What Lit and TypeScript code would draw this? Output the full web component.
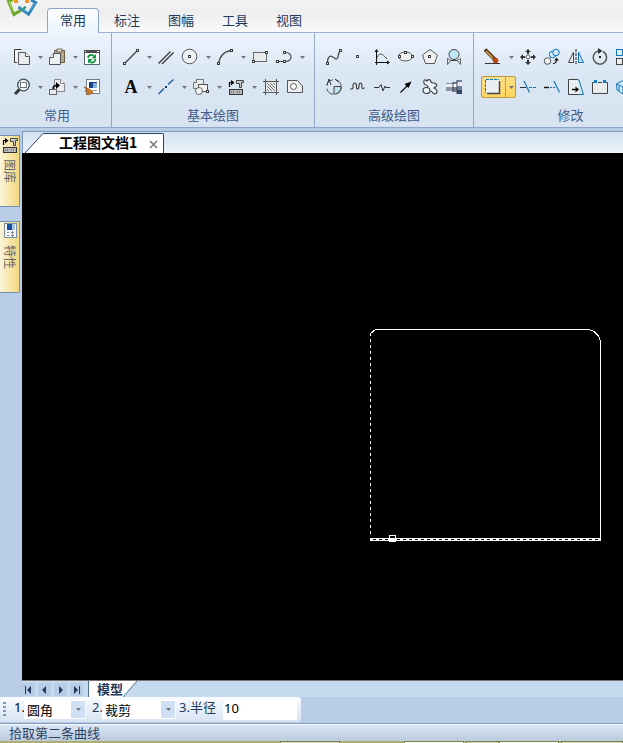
import { LitElement, html, svg, css, nothing } from "lit";
import { customElement, property, state } from "lit/decorators.js";
import { classMap } from "lit/directives/class-map.js";

const K = "#3c3c3c";
const BL = "#1373b5";

const dot = (x: number, y: number) =>
  svg`<rect x=${x - 1} y=${y - 1} width="3" height="3" fill="#3c3c3c" /><rect x=${x} y=${y} width="1" height="1" fill="#fff" />`;

const ICONS: Record<string, unknown> = {
  copy: svg`<path d="M8.500 1.500H1.500V14.500H4" fill="#f2f4f6" stroke=${K}/><path d="M5.500 4.500H12.500L16.500 8.500V16.500H5.500Z" fill="#e9ecee" stroke="#555"/><path d="M12.500 4.500V8.500H16.500" fill="#fff" stroke="#555"/>`,
  paste: svg`<path d="M6.500 2.500H16.500V14.500H6.500Z" fill="#b5a58d" stroke="#6b5d4a"/><rect x="9" y="1" width="5" height="3" fill="#e8dfc9" stroke="#5f5646" stroke-width=".8"/><path d="M5.500 5.500H12.500V16.500H1.500V9.500Z" fill="#edf1f3" stroke="#555"/><path d="M5.500 5.500V9.500H1.500" fill="#fff" stroke="#555"/>`,
  refresh: svg`<rect x="1.500" y="2.500" width="15" height="14" fill="#fff" stroke="#5d666b"/><rect x="1" y="2" width="16" height="3" fill="#4a4a4a"/><path d="M2 3.500H3M14 3.500H16" stroke="#fff"/><path d="M5 10C5.500 6.500 9.500 6 11 8.500" fill="none" stroke="#129a42" stroke-width="1.800"/><path d="M13 6V10.500H8.500Z" fill="#129a42"/><path d="M12.500 11C12 15 8 15.500 6.500 13" fill="none" stroke="#129a42" stroke-width="1.800"/><path d="M5 15.500V11H9.500Z" fill="#129a42"/>`,
  zoom: svg`<path d="M6.500 11.500L2 16" stroke="#333" stroke-width="3"/><circle cx="10.500" cy="7" r="5.800" fill="#eef6fb" stroke="#454b4f" stroke-width="1.300"/><rect x="7.500" y="4.500" width="6" height="5" fill="#fff" stroke="#6c757b"/>`,
  insert: svg`<path d="M6.500 1.500H12.500L16.500 5.500V13.500H6.500Z" fill="#eceff1" stroke="#888"/><path d="M12.500 1.500V5.500H16.500" fill="#fff" stroke="#888"/><rect x="1.500" y="11.500" width="7" height="5" fill="#e8ebee" stroke="#666"/><path d="M5 11C5 8 6 7.500 8.500 7.500" fill="none" stroke="#000" stroke-width="1.500"/><path d="M8 4L12 7.500L8 11Z" fill="#000"/>`,
  format: svg`<rect x="3.500" y="1.500" width="13" height="14" fill="#fff" stroke="#6f7b83"/><rect x="6" y="4" width="8" height="6" fill="#173f85"/><rect x="10" y="5" width="4" height="5" fill="#7fb2dc"/><path d="M9.500 12.500H14" stroke="#999"/><path d="M1 9L7 11.500L10 14C8 17 5 17 3 16L6 14.500L2 13L4 12Z" fill="#d97b21" stroke="#8d4d13" stroke-width=".8"/>`,
  line: svg`<path d="M2.500 15.500L15.500 2.500" stroke=${K} stroke-width="1.200"/>${dot(2, 15)}${dot(15, 2)}`,
  parallel: svg`<path d="M1.500 15.500L13.500 3.500M5 16L16.500 4.500" stroke=${K} stroke-width="1.400"/>`,
  circle: svg`<circle cx="8.500" cy="8.500" r="7.300" fill="#eef1f3" stroke="#555"/>${dot(8, 8)}`,
  arc: svg`<path d="M2.500 16C3.500 8 8 3.500 15.500 2.500" fill="none" stroke="#555" stroke-width="1.300"/>${dot(2, 15)}${dot(15, 2)}`,
  rect: svg`<rect x="2.500" y="4.500" width="13" height="9" fill="#e9ecee" stroke="#666"/>${dot(2, 13)}${dot(15, 4)}`,
  poly: svg`<path d="M2.500 13.500H10.500C18 13.500 18 4 10 4.500H9" fill="none" stroke="#555" stroke-width="1.200"/>${dot(2, 13)}${dot(9, 13)}${dot(9, 4)}`,
  text: svg`<text x="9" y="15" text-anchor="middle" font-family="Liberation Serif, serif" font-weight="700" font-size="18" fill="#0b0b0b">A</text>`,
  center: svg`<path d="M1.500 16L7 10.500M11 6.500L16.500 1.500" stroke="#1a5a9c" stroke-width="1.400"/><rect x="8" y="8" width="2" height="2" fill="#0e3b70"/>`,
  block: svg`<path d="M4.500 1.500H11.500V10.500H1.500V4.500Z" fill="#e8ebed" stroke="#777"/><path d="M4.500 1.500V4.500H1.500" fill="#fff" stroke="#777"/><rect x="6.500" y="6.500" width="9" height="7" fill="#f3f5f6" stroke="#555"/><circle cx="7" cy="13" r="3.500" fill="#f1f3f4" stroke="#666"/>${dot(15, 13)}`,
  library: svg`<rect x="2.500" y="11.500" width="13" height="5" fill="#b8b8b8" stroke="#333"/><path d="M4 14H8M10 14H14" stroke="#444" stroke-dasharray="1 1"/><path d="M2.500 9V4.500H5" fill="none" stroke="#000" stroke-width="1.200"/><path d="M4 2L7.500 4.500L4 7.500Z" fill="#000"/><path d="M9.500 2.500H16.500V4.500H14.500V9.500H12.500V5.500H9.500Z" fill="#ccc" stroke="#444"/>`,
  hatch: svg`<rect x="3" y="3" width="12" height="12" fill="#e6e9ec"/><path d="M3.500 1V17M14.500 1V17M1 3.500H17M1 14.500H17" stroke="#555"/><path d="M5 8L10 13M5 5L13 13M8 5L13 10M11 5L13 7M5 11L7 13" stroke="#777"/>`,
  region: svg`<path d="M1.500 2.500H11.500L16.500 8V14.500H1.500Z" fill="#eceff1" stroke="#555"/><circle cx="7.500" cy="8.500" r="3" fill="#fff" stroke="#555"/>`,
  spline: svg`<path d="M2.500 15.500C2 11 4 7 7 8.500S11 12.500 12.500 10S12.500 4 16 3" fill="none" stroke="#444" stroke-width="1.300"/>${dot(2, 15)}${dot(15, 2)}`,
  point: svg`<rect x="7.500" y="7.500" width="2" height="2" fill="#fff" stroke="#444"/>`,
  axis: svg`<path d="M3.500 17V3M2 14.500H15" stroke="#111"/><path d="M3.500 1L5.500 4H1.500ZM17 14.500L14 12.500V16.500Z" fill="#111"/><path d="M4 10C6 4 9 5 14 11" fill="none" stroke="#555"/>`,
  ellipse: svg`<ellipse cx="8.500" cy="8.500" rx="7" ry="4.500" fill="#eef0f2" stroke="#555"/>${dot(2, 8)}${dot(15, 8)}${dot(8, 4)}`,
  polygon: svg`<path d="M9 1.500L16.500 7L13.500 15.500H4.500L1.500 7Z" fill="#eef0f2" stroke="#555"/>${dot(8, 8)}`,
  lens: svg`<circle cx="9" cy="6.500" r="5" fill="#bfe6f8" stroke="#444"/><path d="M5.500 12.500H12.500" stroke="#444"/><path d="M2.500 10.500V16.500L6 12.500ZM15.500 10.500V16.500L12 12.500Z" fill="#dce6ee" stroke="#444" stroke-width=".8"/>`,
  detail: svg`<circle cx="9" cy="9" r="7.300" fill="none" stroke="#555" stroke-dasharray="9 3"/><path d="M9 8.500H16C16 13 13 16 9 16Z" fill="#bfe3f5" stroke="#444"/><path d="M2 7L4 1L6 7M10 1L14 4" fill="none" stroke="#333"/>`,
  wave: svg`<path d="M1.500 10.500C3 12 4.500 10 4 8C4 4 7.500 4 7.500 8C7 12 10 12 10 8C10 4 13 4 13 8C12.500 11 14 11.500 15.500 9.500" fill="none" stroke="#333" stroke-width="1.100"/>`,
  breakline: svg`<path d="M1 9.500H6L8 6.500L10 13L12 8L12.500 9.500H17" fill="none" stroke="#333"/>`,
  arrow: svg`<path d="M3.500 14.500L11 7" stroke="#111" stroke-width="1.200"/><path d="M14.500 3.500L11.500 10L7.500 6Z" fill="#000"/>`,
  gear: svg`<path d="M3 5C2 2 4 1 6 3C7 1 10 1 10 4C11 6 13 4 15 6C17 8 14 9 13 10C16 11 17 14 15 15.500C12 17 12 14 10 13M3 5C3 8 7 6 7 9" fill="#eaf4fa" stroke="#333" stroke-width="1.100"/><ellipse cx="5.500" cy="12.500" rx="3.500" ry="3" fill="#eaf4fa" stroke="#333" stroke-width="1.100"/>`,
  shaft: svg`<rect x="1" y="5" width="7" height="8" fill="#8a95a3"/><rect x="1" y="6" width="7" height="3" fill="#e8edf2"/><rect x="8" y="4" width="4" height="10" fill="#6e7b8c"/><rect x="8" y="6" width="4" height="3" fill="#fff"/><rect x="12" y="2" width="5" height="14" fill="#6b7f99"/><rect x="12" y="4" width="5" height="4" fill="#e5ebf2"/><rect x="12" y="12" width="5" height="4" fill="#34496a"/><path d="M8 4V14M12 2V16" stroke="#445"/>`,
  erase: svg`<path d="M1 15.500H16" stroke="#333"/><path d="M1 1.500L11 11.500" stroke="#4b3524" stroke-width="3.800"/><path d="M2 3L9 10" stroke="#e8a94b" stroke-width="1.400"/><circle cx="11.500" cy="12.500" r="2.800" fill="#c2440e"/>`,
  move: svg`<path d="M9 1L12 4H6ZM9 17L12 14H6ZM1 9L4 6V12ZM17 9L14 6V12Z" fill="#333"/><path d="M9 4V6M9 12V14M4 9H6M12 9H14" stroke="#333" stroke-width="2"/><circle cx="9" cy="9" r="2" fill="#fff" stroke="#555"/>`,
  duplicate: svg`<circle cx="4.500" cy="13" r="3.300" fill="#eef0f2" stroke="#555"/><circle cx="9.500" cy="6.500" r="3.300" fill="#cde9f8" stroke=${BL}/><circle cx="13" cy="4.500" r="3.300" fill="#cde9f8" stroke=${BL}/><path d="M10 15.500C13 15.500 13.500 14 13.500 12" fill="none" stroke="#222" stroke-width="1.200"/><path d="M13.500 9.500L16 12.500H11Z" fill="#222"/>`,
  mirror: svg`<path d="M9 1V17" stroke="#222" stroke-dasharray="3 1"/><path d="M6.500 4V14.500H1.500Z" fill="#eee" stroke="#444"/><path d="M11.500 4V14.500H16.500Z" fill="#bfe3f5" stroke=${BL}/>`,
  rotate: svg`<path d="M12 3.500A6.700 6.700 0 1 1 7 3" fill="none" stroke="#555" stroke-width="1.500"/><path d="M7 0L11.500 3L7 6Z" fill="#333"/><rect x="8" y="8" width="2" height="2" fill="#222"/>`,
  array: svg`<rect x="1.500" y="1.500" width="6" height="6" fill="#d5ecf9" stroke=${BL}/><rect x="1.500" y="10.500" width="6" height="6" fill="#eee" stroke="#444"/><rect x="10.500" y="1.500" width="6" height="6" fill="#d5ecf9" stroke=${BL}/><rect x="10.500" y="10.500" width="6" height="6" fill="#d5ecf9" stroke=${BL}/>`,
  fillet: svg`<rect x="2" y="2" width="14" height="14" fill="#eceff2"/><path d="M15.500 3V15.500H3" fill="none" stroke="#444" stroke-width="1.500"/><path d="M2 1.500H15M1.500 2V15" stroke="#0b78c8" stroke-dasharray="3 1"/>`,
  trim: svg`<path d="M1 9.500H7" stroke="#333"/><path d="M10 9.500H17" stroke=${BL} stroke-dasharray="3 1"/><path d="M5 3L10.500 14.500" stroke=${BL} stroke-width="1.200"/>`,
  extend: svg`<path d="M1 9.500H6" stroke="#111" stroke-width="1.400"/><path d="M7 9.500H13" stroke=${BL} stroke-dasharray="2 1"/><path d="M11 3L16.500 14.500" stroke=${BL} stroke-width="1.200"/>`,
  stretch: svg`<path d="M10 2L12 2L16.500 16.500H9" fill="#cfe9f7" stroke=${BL}/><path d="M11 1.500H1.500V16.500H12" fill="#eceff1" stroke="#444"/><path d="M5 11.500H9" stroke="#000" stroke-width="1.400"/><path d="M8.500 8.500L12 11.500L8.500 14.500Z" fill="#000"/>`,
  split: svg`<path d="M4 4.500H1.500V15.500H16.500V4.500H14M7 4.500H11" fill="#e9ecef" stroke="#444"/><rect x="3" y="2" width="3" height="3" fill="#0b78c8"/><rect x="12" y="2" width="3" height="3" fill="#0b78c8"/>`,
  solid: svg`<path d="M1.500 6L7 3L13 6V12L8 16L2 12Z" fill="#cfe9f7" stroke=${BL}/><path d="M1.500 6L8 9L13 6M8 9V16M4 8V13M11 8V13" fill="none" stroke=${BL}/>`,
  props: svg`<rect x="3.500" y="1.500" width="12" height="14" fill="#f4f8fb" stroke="#7b8fa5"/><rect x="6" y="2" width="6" height="6" fill="#1b4fa0"/><rect x="11" y="2" width="3" height="6" fill="#a9c6e4"/><path d="M6 10.500H8M10 10.500H13M6 13.500H8M10 13.500H13M11.500 9V15" stroke="#888"/>`,
};

const icon = (name: string) => html`<svg class="icon" viewBox="0 0 18 18" width="18" height="18" aria-hidden="true">${ICONS[name] ?? nothing}</svg>`;

interface Tool { icon: string; label: string; menu?: boolean; active?: boolean }
interface Group { title: string; rows: Tool[][] }
const t = (icon: string, label: string, menu = false, active = false): Tool => ({ icon, label, menu, active });

const GROUPS: Group[] = [
  { title: "常用", rows: [
    [t("copy", "复制", true), t("paste", "粘贴", true), t("refresh", "刷新")],
    [t("zoom", "缩放", true), t("insert", "插入", true), t("format", "特性匹配")],
  ] },
  { title: "基本绘图", rows: [
    [t("line", "直线", true), t("parallel", "平行线"), t("circle", "圆", true), t("arc", "圆弧", true), t("rect", "矩形"), t("poly", "多段线", true)],
    [t("text", "文字", true), t("center", "中心线", true), t("block", "块", true), t("library", "图库", true), t("hatch", "剖面线"), t("region", "填充")],
  ] },
  { title: "高级绘图", rows: [
    [t("spline", "样条"), t("point", "点"), t("axis", "公式曲线"), t("ellipse", "椭圆"), t("polygon", "正多边形"), t("lens", "圆弧拟合")],
    [t("detail", "局部放大"), t("wave", "波浪线"), t("breakline", "双折线"), t("arrow", "箭头"), t("gear", "齿形"), t("shaft", "孔轴")],
  ] },
  { title: "修改", rows: [
    [t("erase", "删除", true), t("move", "平移"), t("duplicate", "平移复制"), t("mirror", "镜像"), t("rotate", "旋转"), t("array", "阵列"), t("rect", "比例")],
    [t("fillet", "过渡", true, true), t("trim", "裁剪"), t("extend", "延伸"), t("stretch", "拉伸"), t("split", "打断"), t("solid", "分解"), t("region", "编辑")],
  ] },
];

@customElement("ribbon-group")
class RibbonGroup extends LitElement {
  @property({ attribute: false }) group!: Group;
  static styles = css`
    :host { display: flex; flex: none; flex-direction: column; box-sizing: border-box; padding: 13px 7px 0; border-right: 1px solid #93a9c8; }
    :host(:first-child) { padding-left: 10px; }
    .rows { display: flex; flex-direction: column; gap: 8px; }
    .row { display: flex; height: 22px; }
    .tool { display: flex; box-sizing: border-box; }
    button { border: 0; padding: 0; margin: 0; background: none; display: flex; align-items: center; justify-content: center; }
    .main { width: 24px; }
    .more { width: 11px; box-sizing: border-box; justify-content: flex-end; padding-right: 2px; }
    .more svg { display: block; }
    .icon { display: block; overflow: visible; }
    .tool.active { background: linear-gradient(#fbe08c, #ffd65c); border-radius: 3px; box-shadow: inset 0 0 0 1px #bd9a45; }
    .active .more { border-left: 1px solid #c7a049; }
    .title { margin: 6px 0 0; height: 23px; font: 400 13px/22px "Noto Sans CJK SC", sans-serif; color: #3f5c8c; text-align: center; }
  `;
  render() {
    return html`
      <div class="rows">
        ${this.group.rows.map((row) => html`<div class="row">
          ${row.map((tool) => html`<div class=${classMap({ tool: true, active: !!tool.active })}>
            <button class="main" aria-label=${tool.label}>${icon(tool.icon)}</button>
            ${tool.menu ? html`<button class="more" aria-label="${tool.label}选项"><svg viewBox="0 0 5 3" width="5" height="3"><path d="M0 0H5L2.500 3Z" fill="#777" /></svg></button>` : nothing}
          </div>`)}
        </div>`)}
      </div>
      <h2 class="title">${this.group.title}</h2>`;
  }
}

@customElement("drawing-canvas")
class DrawingCanvas extends LitElement {
  static styles = css`
    :host { display: block; position: relative; overflow: hidden; background: #000; border-bottom: 1px solid #7d7471; }
    svg { position: absolute; left: 348px; top: 176px; }
  `;
  render() {
    return html`<svg width="232" height="213" viewBox="0 0 232 213" fill="none" stroke="#fff" shape-rendering="crispEdges" role="img" aria-label="圆角矩形">
      <path d="M0.500 4V208" stroke-dasharray="3 3" />
      <path d="M0.500 4.500L5.500 0.500H216.500A14 14 0 0 1 230.500 14.500V211" />
      <path d="M0 209.500H231M0 211.500H231" />
      <path d="M0 210.500H231" stroke-dasharray="3 3" />
      <rect x="19.500" y="206.500" width="6" height="6" />
      <path d="M20 211H25" stroke-width="2" />
    </svg>`;
  }
}

@customElement("app-root")
class AppRoot extends LitElement {
  @state() private tab = "常用";

  static styles = css`
    :host { display: flex; flex-direction: column; min-height: 100vh; overflow: hidden; background: #bacde6; font: 13px/18px "Noto Sans CJK SC", sans-serif; color: #1e395b; }
    button { font: inherit; color: inherit; border: 0; margin: 0; padding: 0; background: none; }
    header { display: flex; align-items: flex-end; height: 32px; background: linear-gradient(#f2f2f2, #eeeeee 40%, #fafafa); border-bottom: 1px solid #9db3d2; }
    .logo { flex: none; width: 47px; height: 32px; }
    .tabs { display: flex; gap: 2px; height: 25px; margin-bottom: -1px; }
    .tab { width: 52px; box-sizing: border-box; border: 1px solid transparent; border-bottom: 0; border-radius: 4px 4px 0 0; padding-bottom: 3px; }
    .tab.on { background: linear-gradient(#fbfdff, #ecf4fd); border-color: #8ba5cb; }
    .ribbon { display: flex; flex: none; overflow: hidden; background: linear-gradient(#ecf4fd, #dae6f4 45%, #d7e3f1); border-bottom: 1px solid #8ea7ca; }
    .work { display: flex; flex: 1; }
    .side { display: flex; flex-direction: column; gap: 14px; width: 22px; padding-top: 7px; flex: none; }
    .side button { display: flex; flex-direction: column; align-items: center; width: 20px; height: 72px; box-sizing: border-box; padding-left: 1px; border: 1px solid #7391b7; border-left: 0; background: linear-gradient(90deg, #fbf5d8, #f2d87e); color: #666; }
    .side span { writing-mode: vertical-rl; text-orientation: sideways; font-size: 12px; margin-top: 5px; }
    .docs { display: flex; flex-direction: column; flex: 1; min-width: 0; padding-top: 3px; }
    .strip { display: flex; align-items: flex-end; height: 21px; padding-left: 2px; background: linear-gradient(#d5e2f1, #ebf3fb); border: 1px solid #7d99bf; border-width: 1px 0 0 1px; }
    .slant { display: block; flex: none; }
    .doc { display: flex; align-items: center; height: 20px; box-sizing: border-box; padding: 0 5px 0 14px; gap: 12px; background: #fff; border: 1px solid #24456f; border-width: 1px 1px 0 0; border-radius: 0 2px 0 0; color: #000; font-weight: 700; font-size: 14px; }
    .doc span { padding-bottom: 3px; }
    .close { display: flex; padding-top: 2px; }
    drawing-canvas { flex: 1; }
    .models { display: flex; height: 16px; background: #c5d9ef; }
    .nav { display: flex; gap: 3px; padding: 2px 5px 0 0; }
    .nav button { width: 13px; height: 13px; background: #b8cbe6; display: flex; align-items: center; justify-content: center; }
    .model { display: flex; }
    .model button { height: 16px; padding-left: 8px; background: #fff; border-left: 1px solid #4f6e96; font-weight: 700; line-height: 16px; }
    .options { display: flex; align-self: flex-start; align-items: flex-start; height: 25px; box-sizing: border-box; padding: 3px 4px 0 3px; margin-bottom: 1px; background: linear-gradient(#fafcff, #d6e3f3); border-radius: 0 3px 3px 0; }
    .grip { width: 3px; height: 16px; margin: 2px 8px 0 0; background: repeating-linear-gradient(#7f97bb 0 2px, transparent 2px 4px); }
    label { display: flex; align-items: flex-start; line-height: 14px; font-family: "Noto Sans", "Noto Sans CJK SC", sans-serif; }
    .first { color: #000; }
    .name { width: 10px; }
    .wide { width: 44px; }
    .pick { position: relative; display: flex; background: #fff; height: 19px; }
    select { appearance: none; border: 0; margin: 0; padding: 0 18px 0 3px; width: 62px; height: 19px; background: none; color: #000; font: 13px/19px "Noto Sans CJK SC", sans-serif; }
    .broad select { width: 74px; }
    .drop { position: absolute; right: 1px; top: 1px; width: 14px; height: 17px; background: #cfe0f4; display: flex; align-items: center; justify-content: center; pointer-events: none; }
    .gap { margin-left: 6px; }
    .tight { margin-left: 3px; }
    input { box-sizing: border-box; border: 0; margin: 0; padding: 0 1px 5px; width: 74px; height: 20px; background: #fff; color: #000; font: 13px/15px "Noto Sans", sans-serif; }
    footer { box-sizing: border-box; height: 18px; padding-left: 9px; border-top: 1px solid #7f9bc1; box-shadow: inset 0 1px #f6f9fd; background: linear-gradient(#dbe6f5, #bccadf); line-height: 18px; color: #2b4265; }
    .edge { display: flex; height: 2px; background: #aeae6a; }
    .edge i { box-sizing: border-box; height: 2px; border: 1px solid #7d8248; border-bottom: 0; background: #d9dab0; }
    .edge .lit { background: #fbfdf6; }
  `;

  private navIcon(d: string) {
    return html`<svg viewBox="0 0 9 8" width="9" height="8"><path d=${d} fill="#1f3a5f" /></svg>`;
  }

  private drop() {
    return html`<span class="drop"><svg viewBox="0 0 5 3" width="5" height="3"><path d="M0 0H5L2.500 3Z" fill="#777" /></svg></span>`;
  }

  render() {
    return html`
      <header>
        <svg class="logo" viewBox="0 0 47 32" aria-hidden="true">
          <path d="M13 0L8.500 1.500L14 14.500L22 9.500" fill="none" stroke="#6caa2c" stroke-width="3" />
          <path d="M13 1.500L9 2.500L14 12" fill="none" stroke="#c4da5a" stroke-width="1" />
          <path d="M31 0L35.500 2.500L28.500 14L18.500 7" fill="none" stroke="#2c82bd" stroke-width="3" />
          <path d="M35 3L28 12.500L20 7" fill="none" stroke="#74bce4" stroke-width="1" />
          <path d="M22 11L25.500 6.500" stroke="#2f9c8c" stroke-width="2.500" />
          <path d="M14 0H18V3H14ZM25 0H29V3H25Z" fill="#f0912b" />
        </svg>
        <nav class="tabs" role="tablist">
          ${["常用", "标注", "图幅", "工具", "视图"].map((n) => html`<button role="tab" aria-selected=${n === this.tab} class=${classMap({ tab: true, on: n === this.tab })} @click=${() => (this.tab = n)}>${n}</button>`)}
        </nav>
      </header>
      <section class="ribbon">${GROUPS.map((g) => html`<ribbon-group .group=${g}></ribbon-group>`)}</section>
      <main class="work">
        <aside class="side">
          <button>${icon("library")}<span>图库</span></button>
          <button>${icon("props")}<span>特性</span></button>
        </aside>
        <section class="docs">
          <div class="strip">
            <svg class="slant" width="20" height="20" viewBox="0 0 20 20"><path d="M0 20L18 0.500H20V20Z" fill="#fff" /><path d="M0 20L18 0.500H20" fill="none" stroke="#24456f" /></svg>
            <div class="doc"><span>工程图文档1</span><button class="close" aria-label="关闭"><svg width="9" height="9" viewBox="0 0 9 9"><path d="M1 1L8 8M8 1L1 8" stroke="#777" stroke-width="1.500" /></svg></button></div>
          </div>
          <drawing-canvas></drawing-canvas>
          <div class="models">
            <div class="nav">
              <button aria-label="第一个">${this.navIcon("M1 0H2V8H1ZM7 0V8L3 4Z")}</button>
              <button aria-label="上一个">${this.navIcon("M6 0V8L2 4Z")}</button>
              <button aria-label="下一个">${this.navIcon("M3 0V8L7 4Z")}</button>
              <button aria-label="最后一个">${this.navIcon("M7 0H8V8H7ZM2 0V8L6 4Z")}</button>
            </div>
            <div class="model"><button>模型</button><svg width="14" height="16" viewBox="0 0 14 16"><path d="M0 0H14L0 16Z" fill="#fff" /><path d="M14 0L0 16" stroke="#4f6e96" /></svg></div>
          </div>
        </section>
      </main>
      <form class="options" @submit=${(e: Event) => e.preventDefault()}>
        <span class="grip"></span>
        <label class="first"><span class="name">1.</span><span class="pick"><select><option>圆角</option><option>倒角</option></select>${this.drop()}</span></label>
        <label class="gap"><span class="name">2.</span><span class="pick broad"><select><option>裁剪</option><option>不裁剪</option></select>${this.drop()}</span></label>
        <label class="tight"><span class="wide">3.半径</span><input type="text" value="10" /></label>
      </form>
      <footer>拾取第二条曲线</footer>
      <div class="edge">${[[280, 60, ""], [64, 60, "lit"], [2, 34, ""], [0, 60, "lit"], [2, 62, ""]].map(([l, w, c]) => html`<i class=${c} style="margin-left:${l}px;width:${w}px"></i>`)}</div>
    `;
  }
}
